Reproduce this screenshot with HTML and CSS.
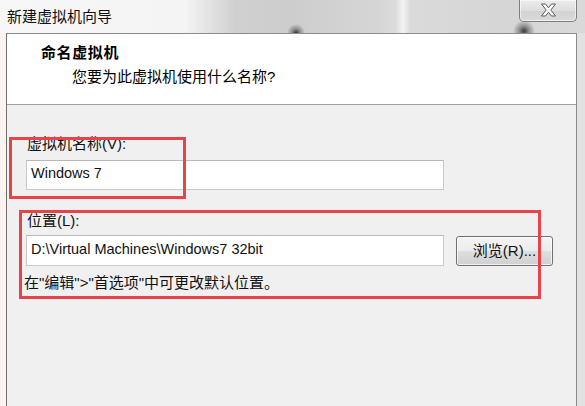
FILE: index.html
```html
<!DOCTYPE html>
<html lang="zh-CN">
<head>
<meta charset="utf-8">
<title>新建虚拟机向导</title>
<link rel="stylesheet" href="styles.css">
</head>
<body>
<div class="screen">
  <div class="titlebar">
    <span class="title">新建虚拟机向导</span>
    <div class="close">
      <svg width="17" height="14" viewBox="0 0 17 14"><polygon points="1.5,1 5.5,1 8.5,4.8 11.5,1 15.5,1 10.8,7 15.5,13 11.5,13 8.5,9.2 5.5,13 1.5,13 6.2,7" fill="#fbfbfb" stroke="#5c5c5c" stroke-width="1" stroke-linejoin="round"/></svg>
    </div>
  </div>
  <div class="frame">
    <div class="header">
      <div class="h-title">命名虚拟机</div>
      <div class="h-sub">您要为此虚拟机使用什么名称?</div>
    </div>
    <div class="content">
      <div class="label">虚拟机名称(V):</div>
      <div class="field field-name">Windows 7</div>
      <div class="label label-loc">位置(L):</div>
      <div class="row">
        <div class="field field-loc">D:\Virtual Machines\Windows7 32bit</div>
        <button class="btn">浏览(R)...</button>
      </div>
      <div class="hint">在"编辑"&gt;"首选项"中可更改默认位置。</div>
    </div>
  </div>
  <div class="mark mark-name"></div>
  <div class="mark mark-loc"></div>
</div>
</body>
</html>
```

FILE: styles.css
```css
html, body {
  margin: 0;
  padding: 0;
  width: 585px;
  height: 406px;
  overflow: hidden;
}
body {
  font-family: "Liberation Sans", "Noto Sans CJK SC", sans-serif;
  font-size: 15px;
  color: #000;
  background: #e4e4e4;
}
.screen {
  position: relative;
  width: 585px;
  height: 406px;
  display: flex;
  flex-direction: column;
  background:
    linear-gradient(to right, #fbf2f2 0, #fbf2f2 6px, transparent 6px, transparent 577px, #e2e2e2 577px);
}
.titlebar {
  height: 33px;
  flex: none;
  display: flex;
  align-items: flex-start;
  justify-content: space-between;
  background:
    radial-gradient(circle at 296px 33px, rgba(20,20,20,0.85) 0, rgba(40,40,40,0.4) 4px, rgba(60,60,60,0) 9px),
    radial-gradient(circle at 524px 31px, rgba(20,20,20,0.8) 0, rgba(40,40,40,0.4) 5px, rgba(60,60,60,0) 11px),
    linear-gradient(to right, #f7f7f7 0, #f4f4f4 185px, #d0d0d0 235px, #cdcdcd 290px, #d6d6d6 380px, #dcdcdc 396px, #f3f3f3 403px, #dadada 410px, #d6d6d6 500px, #d9d9d9 585px);
}
.title {
  margin: 7px 0 0 7px;
  line-height: 20px;
  color: #111;
}
.close {
  width: 58px;
  height: 22px;
  margin-right: 8px;
  box-sizing: border-box;
  border: 1px solid #7e7e7e;
  border-top: none;
  border-radius: 0 0 5px 5px;
  background: linear-gradient(#ececec, #dedede 50%, #d2d2d2 51%, #dadada);
  box-shadow: inset 0 0 0 1px rgba(255,255,255,0.6);
  display: flex;
  align-items: center;
  justify-content: center;
}
.close svg { display: block; margin-top: -1px; }
.frame {
  flex: 1;
  margin: 0 8px 0 6px;
  border-left: 1px solid #707070;
  border-right: 1px solid #8a8a8a;
  background: #f0f0f0;
  display: flex;
  flex-direction: column;
}
.header {
  height: 72px;
  box-sizing: border-box;
  background: #fff;
  border-top: 1px solid #8c8c8c;
  border-bottom: 1px solid #a0a0a0;
  padding: 9px 0 0 34px;
  flex: none;
}
.h-title {
  font-weight: bold;
  line-height: 20px;
  letter-spacing: 0.6px;
}
.h-sub {
  margin: 4px 0 0 31px;
  line-height: 20px;
}
.content {
  padding: 30px 0 0 19px;
}
.label {
  line-height: 18px;
  padding-left: 1px;
  color: #111;
}
.label-loc {
  margin-top: 22px;
}
.field {
  box-sizing: border-box;
  width: 418px;
  height: 30px;
  background: #fff;
  border: 1px solid #c9c9c9;
  border-top-color: #b9b9b9;
  padding: 0 4px;
  line-height: 25px;
  font-size: 14.5px;
  white-space: nowrap;
  color: #111;
}
.field-name {
  margin-top: 7px;
}
.row {
  margin-top: 5px;
  display: flex;
  align-items: flex-start;
  gap: 12px;
}
.field-loc {
  height: 31px;
  line-height: 27px;
}
.btn {
  margin-top: 1px;
  width: 97px;
  height: 30px;
  box-sizing: border-box;
  border: 1px solid #707070;
  border-radius: 3px;
  background: linear-gradient(#f4f4f4 0, #ececec 48%, #dedede 52%, #d0d0d0 100%);
  box-shadow: inset 0 0 0 1px rgba(255,255,255,0.7);
  font-family: inherit;
  font-size: 15px;
  color: #111;
  padding: 0;
  line-height: 26px;
}
.hint {
  margin-top: 8px;
  line-height: 18px;
  margin-left: -2px;
  color: #111;
}
.mark {
  position: absolute;
  box-sizing: border-box;
  border: 3px solid #e8424a;
}
.mark-name {
  left: 9px;
  top: 137px;
  width: 177px;
  height: 62px;
}
.mark-loc {
  left: 19px;
  top: 210px;
  width: 522px;
  height: 89px;
}
```
